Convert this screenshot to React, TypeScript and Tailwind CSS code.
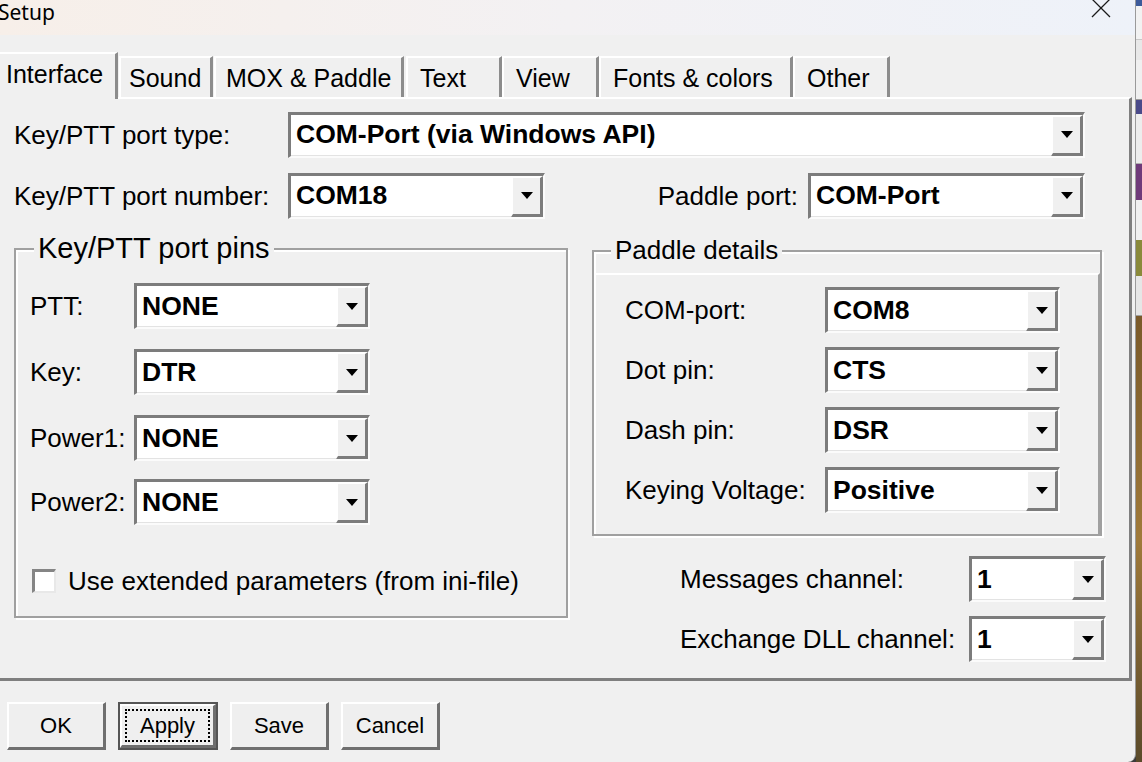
import React from "react";

function Arrow() {
  return (
    <div className="w-0 h-0 border-l-[6px] border-r-[6px] border-t-[7px] border-l-transparent border-r-transparent border-t-black" />
  );
}

function Combo({ w, value }: { w: string; value: string }) {
  return (
    <div
      className={`${w} h-[46px] flex bg-white border-t-[3px] border-l-[3px] border-t-[#7c7c7c] border-l-[#7c7c7c] border-b-2 border-r-2 border-b-[#fbfbfb] border-r-[#fbfbfb]`}
    >
      <div className="flex-1 flex items-center pl-[5px] text-[26.5px] font-bold leading-none text-black border-b border-[#e3e3e3]">
        {value}
      </div>
      <div className="w-[32px] flex items-center justify-center bg-[#f0f0f0] border-t-2 border-l-2 border-t-white border-l-white border-b-[3px] border-r-[3px] border-b-[#7c7c7c] border-r-[#7c7c7c]">
        <Arrow />
      </div>
    </div>
  );
}

function Tab({ label, w, pl, active }: { label: string; w: string; pl: string; active?: boolean }) {
  if (active) {
    return (
      <div
        className={`${w} h-[47px] -mb-[2px] relative z-10 bg-[#f0f0f0] border-t-2 border-t-white border-r-[3px] border-r-[#8c8c8c] ${pl} pt-[5px] text-[25px] leading-[30px] text-black`}
      >
        {label}
      </div>
    );
  }
  return (
    <div
      className={`${w} h-[41px] bg-[#f0f0f0] border-t-2 border-l-2 border-t-white border-l-white border-r-[3px] border-r-[#8c8c8c] ${pl} pt-[5px] text-[25px] leading-[30px] text-black`}
    >
      {label}
    </div>
  );
}

function Btn({ label, focused }: { label: string; focused?: boolean }) {
  if (focused) {
    return (
      <div className="w-[100px] h-[48px] border-2 border-[#555555] flex">
        <div className="flex-1 flex items-center justify-center bg-[#efefef] border-t-2 border-l-2 border-t-white border-l-white border-b-[3px] border-r-[3px] border-b-[#6f6f6f] border-r-[#6f6f6f] p-[3px]">
          <div className="w-full h-full border-2 border-dotted border-black flex items-center justify-center text-[22px] leading-none text-black">
            {label}
          </div>
        </div>
      </div>
    );
  }
  return (
    <div className="w-[99px] h-[48px] flex items-center justify-center bg-[#efefef] border-t-2 border-l-2 border-t-white border-l-white border-b-[3px] border-r-[3px] border-b-[#6f6f6f] border-r-[#6f6f6f] text-[22px] leading-none text-black">
      {label}
    </div>
  );
}

function PinRow({ label, value, mt }: { label: string; value: string; mt: string }) {
  return (
    <div className={`${mt} h-[46px] flex items-center`}>
      <div className="w-[118px] pl-[14px] text-[26px] leading-none text-black">{label}</div>
      <Combo w="w-[236px]" value={value} />
    </div>
  );
}

function PaddleRow({ label, value, mt }: { label: string; value: string; mt: string }) {
  return (
    <div className={`${mt} h-[46px] flex items-center`}>
      <div className="w-[231px] pl-[31px] text-[26px] leading-none text-black">{label}</div>
      <Combo w="w-[235px]" value={value} />
    </div>
  );
}

export default function App() {
  return (
    <div className="w-[1142px] h-[762px] flex overflow-hidden bg-[#3b3b3b] font-['Liberation_Sans',Arial,sans-serif]">
      {/* Dialog window */}
      <div className="w-[1136px] h-[762px] flex flex-col bg-[#f0f0f0] border-r border-[#9a9a9a] rounded-br-[8px] overflow-hidden">
        {/* Title bar */}
        <div className="h-[35px] flex justify-between bg-linear-to-r from-[#f7efe9] via-[#f3f1f3] to-[#eef2f9]">
          <div className="-ml-[2px] -mt-[3px] text-[21px] leading-[30px] text-black font-['Noto_Sans',sans-serif]">
            Setup
          </div>
          <div className="mr-[23px] -mt-[2px]">
            <svg width="22" height="22" viewBox="0 0 22 22">
              <path d="M2 1 L20 19 M20 1 L2 19" stroke="#1a1a1a" strokeWidth="1.3" fill="none" />
            </svg>
          </div>
        </div>

        {/* Tabs */}
        <div className="mt-[17px] h-[45px] flex items-end">
          <Tab label="Interface" w="w-[118px]" pl="pl-[6px]" active />
          <div className="ml-[1px]">
            <Tab label="Sound" w="w-[94px]" pl="pl-[8px]" />
          </div>
          <div className="ml-[1px]">
            <Tab label="MOX & Paddle" w="w-[190px]" pl="pl-[10px]" />
          </div>
          <div className="ml-[2px]">
            <Tab label="Text" w="w-[96px]" pl="pl-[12px]" />
          </div>
          <Tab label="View" w="w-[97px]" pl="pl-[12px]" />
          <Tab label="Fonts & colors" w="w-[194px]" pl="pl-[12px]" />
          <Tab label="Other" w="w-[97px]" pl="pl-[12px]" />
        </div>

        {/* Panel */}
        <div className="w-[1132px] h-[584px] border-t-2 border-t-white border-r-[3px] border-r-[#7f7f7f] border-b-[3px] border-b-[#7f7f7f] pt-[13px]">
          {/* Row 1 */}
          <div className="w-[1085px] h-[45px] flex items-center">
            <div className="w-[288px] pl-[14px] text-[26px] leading-none text-black">Key/PTT port type:</div>
            <Combo w="w-[797px]" value="COM-Port (via Windows API)" />
          </div>
          {/* Row 2 */}
          <div className="mt-[16px] w-[1085px] h-[45px] flex items-center">
            <div className="w-[288px] pl-[14px] text-[26px] leading-none text-black">Key/PTT port number:</div>
            <Combo w="w-[257px]" value="COM18" />
            <div className="flex-1 flex justify-end pr-[10px] text-[26px] leading-none text-black">Paddle port:</div>
            <Combo w="w-[277px]" value="COM-Port" />
          </div>

          {/* Lower section */}
          <div className="mt-[30px] flex items-start">
            {/* Key/PTT port pins */}
            <div className="ml-[14px] w-[554px] h-[370px] border-2 border-[#a0a0a0] shadow-[inset_2px_2px_0_#ffffff,2px_2px_0_#ffffff] flex flex-col">
              <div className="-mt-[19px] ml-[18px] w-fit px-[4px] bg-[#f0f0f0] text-[29px] leading-[34px] text-black">
                Key/PTT port pins
              </div>
              <PinRow label="PTT:" value="NONE" mt="mt-[18px]" />
              <PinRow label="Key:" value="DTR" mt="mt-[20px]" />
              <PinRow label="Power1:" value="NONE" mt="mt-[20px]" />
              <PinRow label="Power2:" value="NONE" mt="mt-[18px]" />
              <div className="mt-[44px] h-[24px] pl-[16px] flex items-center">
                <div className="w-[24px] h-[24px] bg-white border-t-[3px] border-l-[3px] border-t-[#858585] border-l-[#858585] border-b-2 border-r-2 border-b-[#e8e8e8] border-r-[#e8e8e8]" />
                <div className="ml-[12px] text-[26px] leading-none text-black">Use extended parameters (from ini-file)</div>
              </div>
            </div>

            {/* Right column */}
            <div className="ml-[24px] mt-[2px] w-[514px] flex flex-col">
              <div className="w-[510px] h-[286px] border-2 border-[#a0a0a0] shadow-[inset_2px_2px_0_#ffffff,2px_2px_0_#ffffff] flex flex-col">
                <div className="-mt-[17px] ml-[17px] w-fit px-[4px] bg-[#f0f0f0] text-[26px] leading-[30px] text-black">
                  Paddle details
                </div>
                <div className="mt-[8px] flex-1 border-t-2 border-t-white border-r-2 border-r-[#a0a0a0]">
                  <PaddleRow label="COM-port:" value="COM8" mt="mt-[12px]" />
                  <PaddleRow label="Dot pin:" value="CTS" mt="mt-[14px]" />
                  <PaddleRow label="Dash pin:" value="DSR" mt="mt-[14px]" />
                  <PaddleRow label="Keying Voltage:" value="Positive" mt="mt-[14px]" />
                </div>
              </div>
              <div className="mt-[20px] h-[46px] flex items-center">
                <div className="w-[377px] pl-[88px] text-[26px] leading-none text-black">Messages channel:</div>
                <Combo w="w-[137px]" value="1" />
              </div>
              <div className="mt-[14px] h-[46px] flex items-center">
                <div className="w-[377px] pl-[88px] text-[26px] leading-none text-black">Exchange DLL channel:</div>
                <Combo w="w-[137px]" value="1" />
              </div>
            </div>
          </div>
        </div>

        {/* Buttons */}
        <div className="mt-[21px] ml-[7px] flex gap-[12px]">
          <Btn label="OK" />
          <Btn label="Apply" focused />
          <Btn label="Save" />
          <Btn label="Cancel" />
        </div>
      </div>

      {/* Background strip at right */}
      <div className="flex-1 flex flex-col">
        <div className="h-[6px] bg-[#3c5a9a]" />
        <div className="h-[34px] bg-[#f2f2f2] border-b border-[#c8c8c8]" />
        <div className="h-[20px] bg-[#e8e8e8]" />
        <div className="h-[40px] bg-[#f0f0f0] border-b border-[#9a9a9a]" />
        <div className="h-[14px] bg-[#4a4a8a]" />
        <div className="h-[50px] bg-[#ededed] border-b border-[#b0b0b0]" />
        <div className="h-[36px] bg-[#6f3a7a]" />
        <div className="h-[40px] bg-[#f0f0f0]" />
        <div className="h-[36px] bg-[#8a8a3a]" />
        <div className="h-[40px] bg-[#e6e6e6] border-b border-[#a0a0a0]" />
        <div className="flex-1 bg-linear-to-b from-[#7a5a2a] via-[#a07a3a] to-[#5a4a2a]" />
      </div>
    </div>
  );
}
